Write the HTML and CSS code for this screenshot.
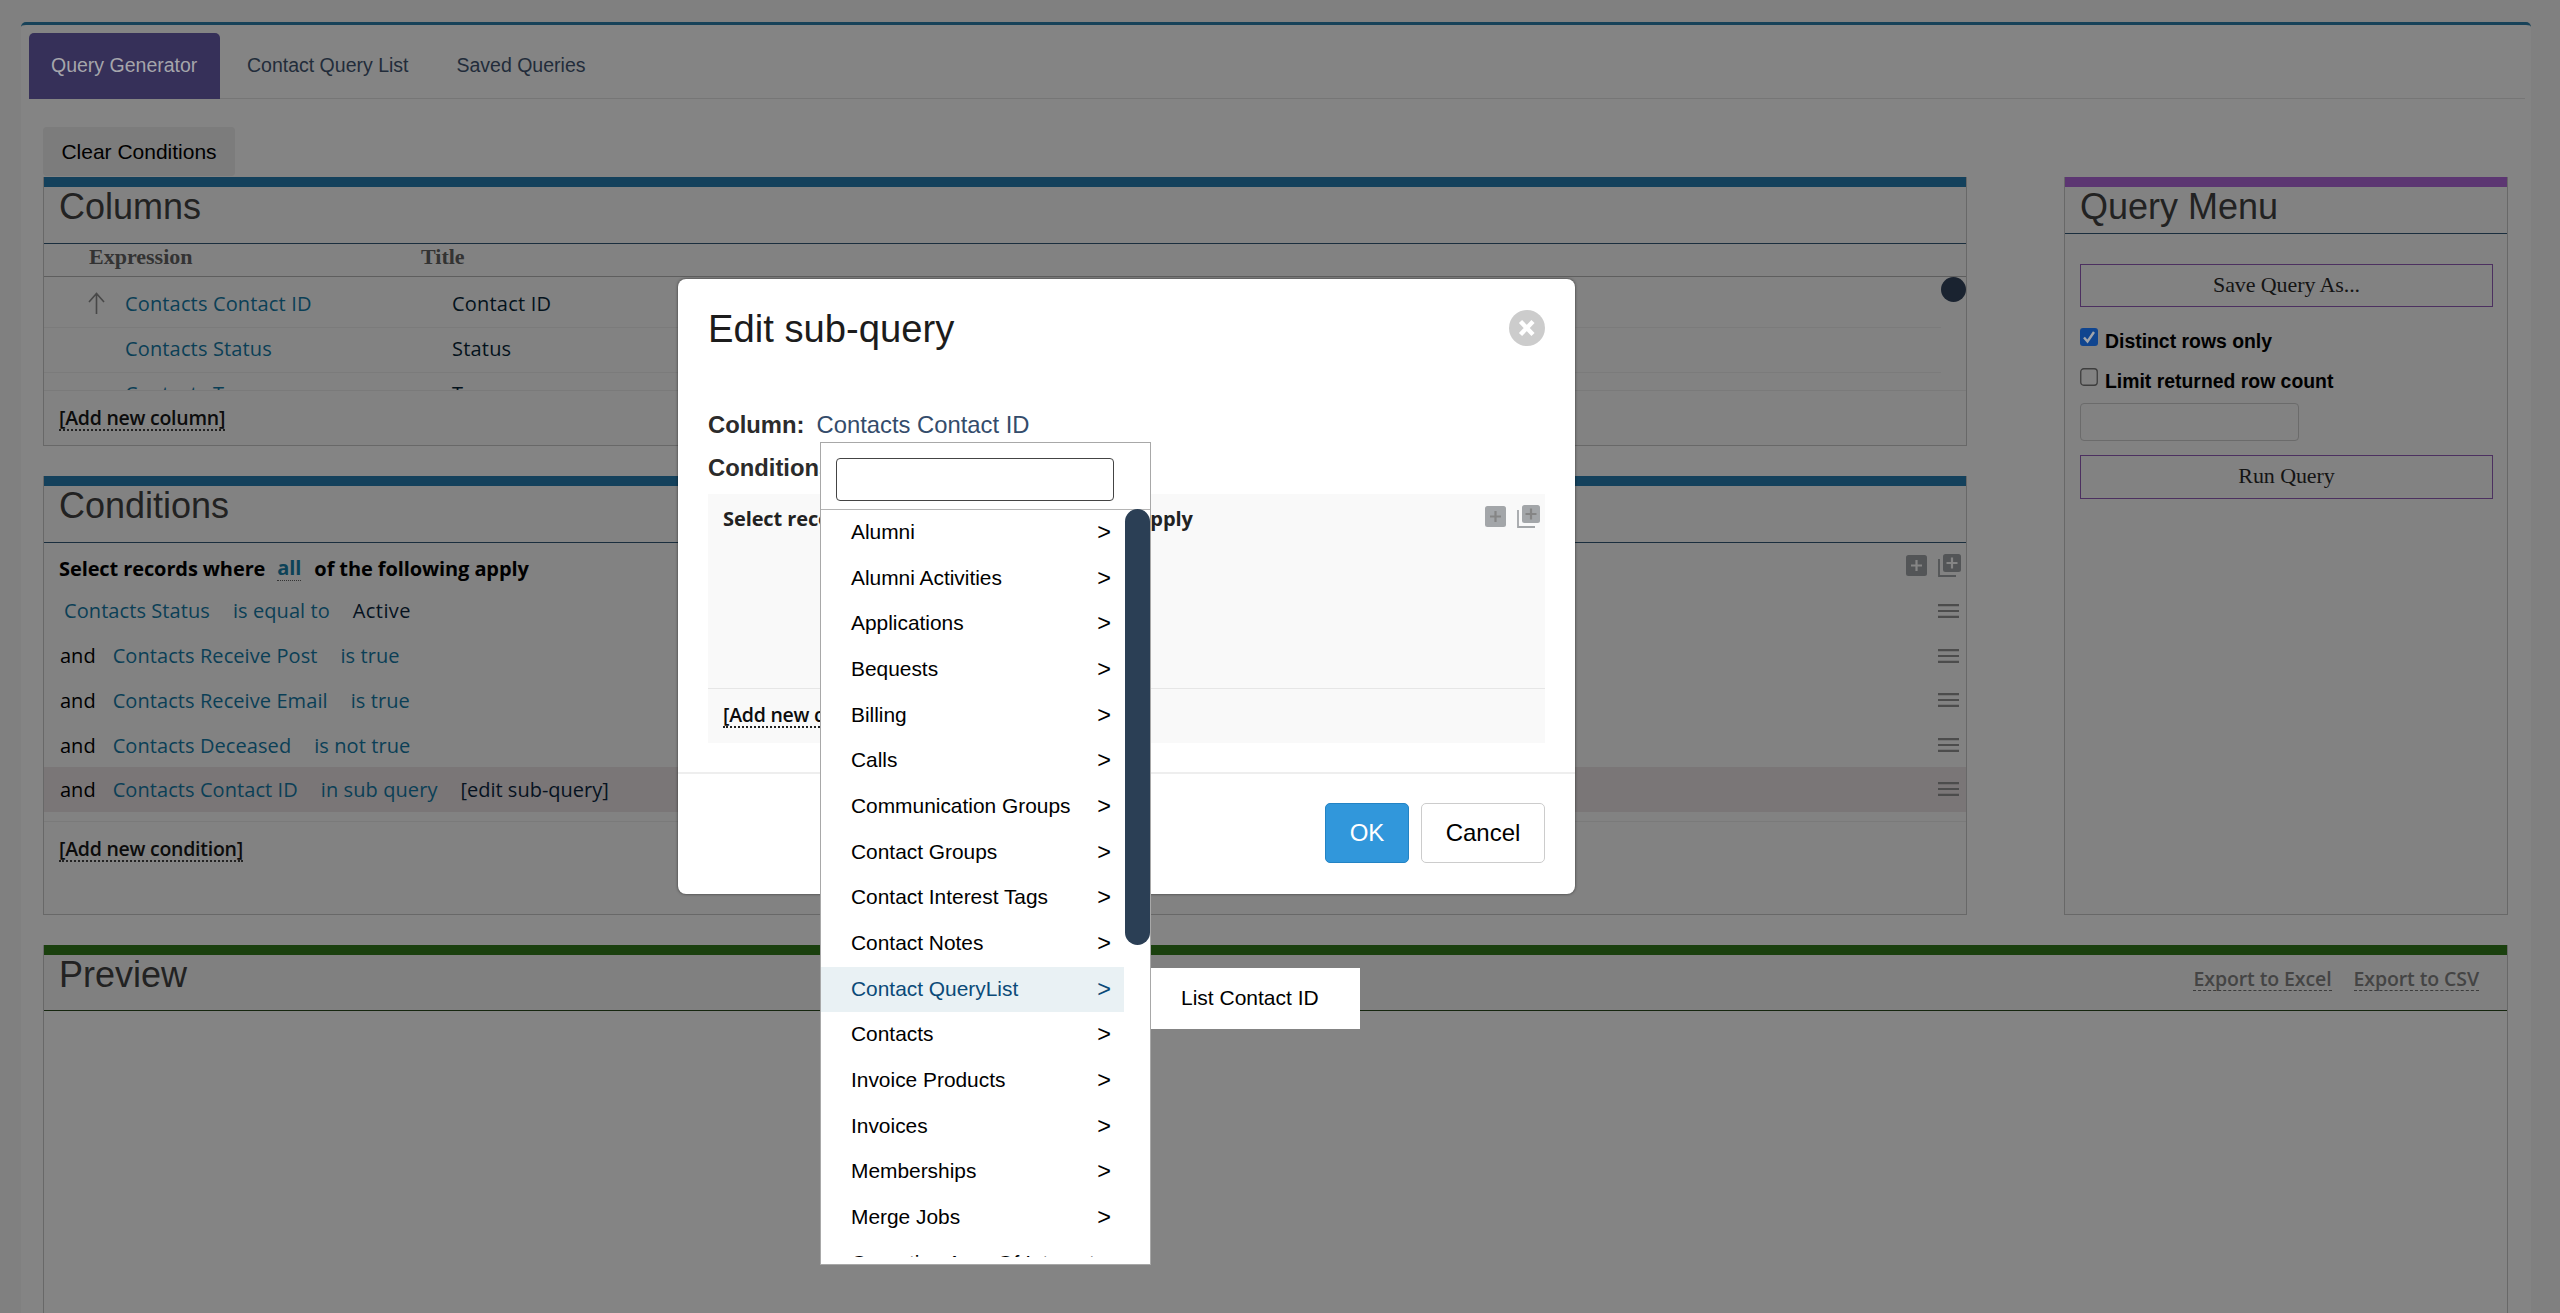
FILE: index.html
```html
<!DOCTYPE html>
<html lang="en">
<head>
<meta charset="utf-8">
<title>Query Generator</title>
<link rel="stylesheet" href="styles.css">
</head>
<body>
<svg class="defs" width="0" height="0">
  <symbol id="i-add" viewBox="0 0 21 21"><rect width="21" height="21" rx="2.5" fill="currentColor"/><path class="cut" d="M10.500 5v11M5 10.500h11" stroke-width="2.200"/></symbol>
  <symbol id="i-addgroup" viewBox="0 0 23 23"><path d="M1 5v17h17" fill="none" stroke="currentColor" stroke-width="1.800"/><rect x="5" width="18" height="18" rx="2.500" fill="currentColor"/><path class="cut" d="M14 3.500v11M8.500 9h11" stroke-width="2.200"/></symbol>
  <symbol id="i-grip" viewBox="0 0 21 14"><path d="M0 1.200h21M0 7h21M0 12.800h21" stroke="currentColor" stroke-width="2.200"/></symbol>
</svg>
<main class="page">
  <nav class="tabs"><a class="tab tab-on">Query Generator</a><a class="tab">Contact Query List</a><a class="tab">Saved Queries</a></nav>
  <div class="content">
    <button class="clear">Clear Conditions</button>
    <div class="top">
      <div class="left">
        <section class="panel columns">
          <h2>Columns</h2>
          <div class="thead"><span>Expression</span><span>Title</span></div>
          <div class="scroller">
            <div class="crow"><svg class="sort" width="17" height="23" viewBox="0 0 17 23"><path d="M8.500 22V2M1 10l7.500-8.500L16 10" fill="none" stroke="#484848" stroke-width="1.600"/></svg><a>Contacts Contact ID</a><b>Contact ID</b></div>
            <div class="crow"><i class="sort"></i><a>Contacts Status</a><b>Status</b></div>
            <div class="crow"><i class="sort"></i><a>Contacts Type</a><b>Type</b></div>
            <span class="thumb"></span>
          </div>
          <div class="foot"><a class="add">[Add new column]</a></div>
        </section>
        <section class="panel conditions">
          <h2>Conditions</h2>
          <div class="lead"><span>Select records where</span><a>all</a><span>of the following apply</span>
            <span class="tools"><svg width="21" height="21"><use href="#i-add"/></svg><svg width="23" height="23"><use href="#i-addgroup"/></svg></span></div>
          <div class="cond first"><a>Contacts Status</a><a>is equal to</a><b>Active</b><svg class="grip" width="21" height="14"><use href="#i-grip"/></svg></div>
          <div class="cond"><em>and</em><a>Contacts Receive Post</a><a>is true</a><svg class="grip" width="21" height="14"><use href="#i-grip"/></svg></div>
          <div class="cond"><em>and</em><a>Contacts Receive Email</a><a>is true</a><svg class="grip" width="21" height="14"><use href="#i-grip"/></svg></div>
          <div class="cond"><em>and</em><a>Contacts Deceased</a><a>is not true</a><svg class="grip" width="21" height="14"><use href="#i-grip"/></svg></div>
          <div class="cond active"><em>and</em><a>Contacts Contact ID</a><a>in sub query</a><b>[edit sub-query]</b><svg class="grip" width="21" height="14"><use href="#i-grip"/></svg></div>
          <div class="foot"><a class="add">[Add new condition]</a></div>
        </section>
      </div>
      <section class="panel menu">
        <h2>Query Menu</h2>
        <div class="menu-body">
          <button class="wide">Save Query As...</button>
          <label class="check"><svg width="18" height="18" viewBox="0 0 18 18"><rect width="18" height="18" rx="3" fill="#10458f"/><path d="M4 9.500l3.500 4L14 4" fill="none" stroke="#a0a4aa" stroke-width="2.400"/></svg>Distinct rows only</label>
          <label class="check"><svg width="18" height="18" viewBox="0 0 18 18"><rect x=".75" y=".75" width="16.500" height="16.500" rx="3" fill="none" stroke="#3e3e3e" stroke-width="1.300"/></svg>Limit returned row count</label>
          <div class="limit"></div>
          <button class="wide run">Run Query</button>
        </div>
      </section>
    </div>
    <section class="panel preview">
      <header><h2>Preview</h2><a>Export to Excel</a><a>Export to CSV</a></header>
    </section>
  </div>
</main>

<div class="modal">
  <header><h1>Edit sub-query</h1><svg width="36" height="36" viewBox="0 0 36 36"><circle cx="18" cy="18" r="18" fill="#ccc"/><path d="M11.500 11.500l12.500 13M24 11.500l-12.500 13" stroke="#fff" stroke-width="4.400"/></svg></header>
  <p class="field"><strong>Column:</strong><a>Contacts Contact ID</a></p>
  <p class="field"><strong>Conditions:</strong></p>
  <div class="sub">
    <div class="lead"><span>Select records where</span><a>all</a><span>of the following apply</span>
      <span class="tools"><svg width="21" height="21"><use href="#i-add"/></svg><svg width="23" height="23"><use href="#i-addgroup"/></svg></span></div>
    <div class="foot"><a class="add">[Add new condition]</a></div>
  </div>
  <footer><button class="ok">OK</button><button class="cancel">Cancel</button></footer>
</div>

<div class="dropdown">
  <div class="search"><div class="box"></div></div>
  <ul>
    <li>Alumni<i>&gt;</i></li><li>Alumni Activities<i>&gt;</i></li><li>Applications<i>&gt;</i></li><li>Bequests<i>&gt;</i></li>
    <li>Billing<i>&gt;</i></li><li>Calls<i>&gt;</i></li><li>Communication Groups<i>&gt;</i></li><li>Contact Groups<i>&gt;</i></li>
    <li>Contact Interest Tags<i>&gt;</i></li><li>Contact Notes<i>&gt;</i></li><li class="on">Contact QueryList<i>&gt;</i></li><li>Contacts<i>&gt;</i></li>
    <li>Invoice Products<i>&gt;</i></li><li>Invoices<i>&gt;</i></li><li>Memberships<i>&gt;</i></li><li>Merge Jobs<i>&gt;</i></li>
    <li>Operation Area Of Interest</li>
  </ul>
  <span class="bar"></span>
</div>
<div class="submenu">List Contact ID</div>
</body>
</html>
```
FILE: styles.css
```css
* { box-sizing: border-box; margin: 0; padding: 0; }
body { width: 2560px; height: 1313px; overflow: hidden; position: relative; background: #808080; font-family: "Liberation Sans", Arial, sans-serif; color: #000; }
button { font: inherit; color: inherit; border: 0; display: block; }
svg { display: block; flex: none; }
em, i, b { font-style: normal; font-weight: 400; }
.defs { position: absolute; }
.cut { stroke: #858585; fill: none; }

.page { margin: 22px 29px 0 21px; height: 1291px; background: #848484; border-top: 3px solid #174259; border-radius: 5px 5px 0 0; padding: 8px 6px 0 8px; overflow: hidden; }
.tabs { display: flex; height: 66px; border-bottom: 1px solid #767676; }
.tab { height: 66px; line-height: 65px; padding: 0 27px; font-size: 19.500px; color: #222c3a; white-space: nowrap; }
.tab + .tab { padding: 0 21px 0 27px; }
.tab-on { background: #363059; color: #a5a5ab; border-radius: 5px 5px 0 0; padding: 0 22px; width: 191px; }
.content { padding: 28px 17px 0 14px; }
.clear { width: 192px; height: 49px; background: #7c7c7c; border-radius: 4px; font-size: 21px; line-height: 47px; text-align: center; padding-bottom: 1px; }

.top { display: flex; justify-content: space-between; margin-top: 1px; }
.left { width: 1924px; display: flex; flex-direction: column; gap: 30px; }
.panel { border: 1px solid #686868; border-top: 0; background: #828282; }
.panel::before { content: ""; display: block; height: 10px; background: #14415c; }
.panel h2 { font-size: 36px; font-weight: 400; color: #222; line-height: 40px; padding-left: 15px; height: 57px; border-bottom: 1px solid #1a2e3e; }

.columns { height: 269px; }
.thead { display: flex; height: 33px; border-bottom: 1px solid #5e5e5e; font: bold 22px/25px "Liberation Serif", serif; color: #333; }
.thead span { padding-left: 45px; width: 332px; }
.scroller { position: relative; height: 114px; overflow: hidden; border-bottom: 1px solid #7a7a7a; font: 20px "Open Sans", sans-serif; }
.crow { display: flex; align-items: center; height: 45px; width: 1897px; padding: 0 0 3px 44px; border-bottom: 1px solid #7b7b7b; line-height: 42px; }
.crow:first-child { height: 51px; padding-top: 6px; }
.sort { width: 17px; margin-right: 20px; }
.crow a { width: 327px; color: #0b3f56; letter-spacing: .15px; }
.crow b { color: #04121c; letter-spacing: .2px; }
.thumb { position: absolute; right: 0; top: 0; width: 25px; height: 25px; border-radius: 50%; background: #1a2330; }
.foot { padding-left: 15px; }
.add { display: inline-block; font: 600 19.500px/22px "Open Sans", sans-serif; color: #0c0c0c; border-bottom: 2px dotted #222; letter-spacing: -.25px; }
.columns .foot { padding-top: 16px; }

.conditions { height: 439px; }
.lead { display: flex; align-items: flex-start; font: 700 20px/26px "Open Sans", sans-serif; white-space: nowrap; letter-spacing: -.1px; }
.conditions .lead { height: 47px; padding: 13px 6px 0 15px; }
.lead a { margin: 0 13px 0 12px; color: #0d4258; border-bottom: 1px dotted #333; line-height: 24px; }
.tools { margin-left: auto; display: flex; align-items: center; gap: 11px; color: #535557; }
.conditions .tools { margin: -2px -1px 0 auto; }
.cond { display: flex; align-items: center; gap: 23px; height: 44.800px; padding: 0 7px 3px 16px; font: 20px "Open Sans", sans-serif; }
.first { padding-left: 20px; }
.first b { letter-spacing: .4px; }
.cond em { margin-right: -6px; }
.cond a { color: #0b3f56; letter-spacing: .08px; }
.cond b { color: #06121f; }
.grip { margin-left: auto; color: #4c4c4c; }
.active { background: #7a7677; height: 45px; margin-top: -2px; padding-bottom: 1px; }
.conditions .foot { margin-top: 9px; border-top: 1px solid #7a7a7a; padding-top: 16px; }

.menu { width: 444px; height: 738px; }
.menu::before { background: #5c3672; }
.menu h2 { height: 47px; }
.menu-body { padding: 30px 14px 0 15px; }
.wide { width: 413px; height: 43px; border: 1px solid #4c3060; background: none; font: 22px/38px "Liberation Serif", serif; letter-spacing: -.1px; color: #141414; text-align: center; padding-bottom: 2px; }
.check { display: flex; gap: 7px; height: 40px; font-size: 19.400px; line-height: 26px; font-weight: 700; }
.wide + .check { margin-top: 21px; }
.limit { width: 219px; height: 38px; margin-top: -5px; border: 1px solid #6b6b6b; border-radius: 4px; }
.run { margin-top: 14px; height: 44px; }

.preview { margin: 30px 0 0; height: 420px; background: #848484; }
.preview::before { background: #1a400e; height: 10px; }
.preview header { display: flex; align-items: flex-start; height: 56px; background: #808080; border-bottom: 1px solid #16260f; padding-right: 28px; gap: 22px; }
.preview h2 { border: 0; margin-right: auto; line-height: 39px; }
.preview a { margin-top: 12px; font: 600 19.500px/23px "Open Sans", sans-serif; letter-spacing: -.1px; color: #444; border-bottom: 1px dashed #3c3c3c; }

.modal { position: absolute; left: 678px; top: 279px; width: 897px; height: 615px; background: #fff; border-radius: 8px; box-shadow: 0 0 3px rgba(0,0,0,.6); padding-top: 31px; }
.modal header { display: flex; justify-content: space-between; height: 101px; padding: 0 30px; }
.modal h1 { font-size: 38.200px; line-height: 38px; font-weight: 400; color: #1c1c1c; }
.field { display: flex; gap: 12px; padding-left: 30px; height: 43px; font-size: 23.800px; line-height: 28px; color: #2b2b2b; }
.field a { color: #344c6b; }
.sub { margin: -3px 30px 0; height: 249px; background: #f9f9f9; display: flex; flex-direction: column; justify-content: space-between; }
.sub .lead { padding: 12px 5px 0 15px; color: #222; font-weight: 700; }
.sub .tools { color: #a3a6a9; margin-top: -1px; }
.sub .cut { stroke: #fff; }
.sub .foot { height: 55px; border-top: 1px solid #e6e6e6; padding: 15px 15px 0; }
.modal footer { display: flex; justify-content: flex-end; gap: 12px; margin-top: 29px; border-top: 2px solid #eee; padding: 29px 30px; }
.modal footer button { height: 60px; border-radius: 5px; font-size: 24px; padding-bottom: 1px; }
.ok { width: 84px; background: #3197db; color: #fff; border: 1px solid #2383c4; }
.cancel { width: 124px; background: #fff; border: 1px solid #ccc; }

.dropdown { position: absolute; left: 820px; top: 442px; width: 331px; height: 823px; background: #fff; border: 1px solid #a8a8a8; }
.search { height: 67px; border-bottom: 1px solid #b4b4b4; padding: 15px; }
.box { width: 278px; height: 43px; border: 1px solid #444; border-radius: 4px; }
.dropdown ul { list-style: none; width: 303px; height: 747px; overflow: hidden; font-size: 20.900px; }
.dropdown li { display: flex; justify-content: space-between; height: 45.680px; line-height: 44px; padding: 0 13px 0 30px; white-space: nowrap; }
.dropdown i { font-size: 23.500px; line-height: 45px; }
.dropdown .on { background: #e9f1f4; color: #0b4a78; }
.bar { position: absolute; right: 0; top: 66px; width: 25px; height: 436px; border-radius: 13px; background: #2b3f55; }
.submenu { position: absolute; left: 1151px; top: 968px; width: 209px; height: 61px; background: #fff; font-size: 21px; line-height: 60px; padding-left: 30px; }
```
